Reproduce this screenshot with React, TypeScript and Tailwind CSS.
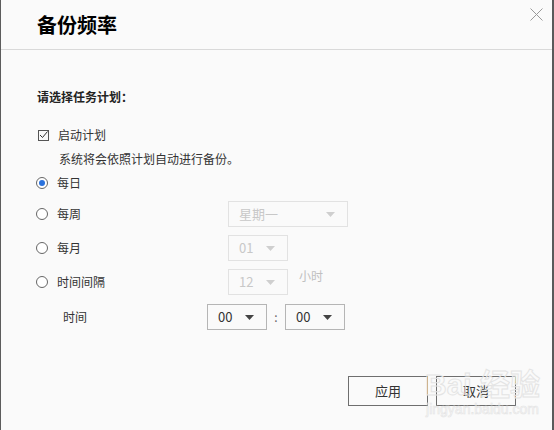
import React from "react";

const font = { fontFamily: '"Noto Sans CJK SC", "Noto Sans", sans-serif' };

function Caret({ off }: { off?: boolean }) {
  return (
    <svg width="9" height="5" viewBox="0 0 9 5">
      <path d="M0 0 L9 0 L4.5 5 Z" fill={off ? "#cfcfcf" : "#444"} />
    </svg>
  );
}

function Select({ value, w, off }: { value: string; w: string; off?: boolean }) {
  return (
    <div
      className={`${w} h-[26px] flex items-center justify-between pl-[10px] pr-[12px] border bg-[#fafafa] text-[13px] ${
        off ? "border-[#e2e2e2] text-[#c8c8c8]" : "border-[#b5b5b5] text-[#333]"
      }`}
    >
      <span>{value}</span>
      <Caret off={off} />
    </div>
  );
}

function Radio({ on }: { on?: boolean }) {
  return (
    <div className="w-[12px] h-[12px] rounded-full border border-[#666] flex items-center justify-center bg-white">
      {on && <div className="w-[6px] h-[6px] rounded-full bg-[#2a72dd]" />}
    </div>
  );
}

const options = [
  { label: "每日", on: true },
  { label: "每周", select: { value: "星期一", w: "w-[120px]" } },
  { label: "每月", select: { value: "01", w: "w-[60px]" } },
  { label: "时间间隔", select: { value: "12", w: "w-[60px]" }, unit: "小时" },
];

export default function App() {
  return (
    <div
      style={font}
      className="relative w-[554px] h-[430px] bg-[#fafafa] border-l border-l-[#5c5c5c] border-r-2 border-r-[#5a5a5a] flex flex-col text-[12px] text-[#333]"
    >
      {/* header */}
      <div className="h-[50px] border-b border-[#d9d9d9] flex items-start justify-between pl-[36px] pr-[9px] shrink-0">
        <h1 className="mt-[11px] text-[20px] font-bold text-black leading-[28px]">备份频率</h1>
        <svg width="13" height="13" viewBox="0 0 13 13" className="mt-[8px]">
          <path d="M0.5 0.5 L12.5 12.5 M12.5 0.5 L0.5 12.5" stroke="#9a9a9a" strokeWidth="1" />
        </svg>
      </div>

      {/* body */}
      <div className="pl-[35px] pt-[37px] flex flex-col">
        <div className="h-[20px] pl-[1px] flex items-center font-bold text-[#222]">请选择任务计划：</div>

        <div className="mt-[18px] h-[20px] flex items-center">
          <div className="ml-[2px] w-[11px] h-[11px] border border-[#555] flex items-center justify-center">
            <svg width="9" height="8" viewBox="0 0 9 8">
              <path d="M1 4 L3.5 6.5 L8.5 0.5" stroke="#333" strokeWidth="1" fill="none" />
            </svg>
          </div>
          <span className="ml-[9px]">启动计划</span>
        </div>
        <div className="mt-[4px] h-[20px] flex items-center pl-[23px]">系统将会依照计划自动进行备份。</div>

        {options.map((o, i) => (
          <div key={i} className={`flex items-center ${i === 0 ? "mt-[4px] h-[20px]" : "mt-[8px] h-[26px]"}`}>
            <div className="w-[192px] flex items-center">
              <Radio on={o.on} />
              <span className="ml-[9px]">{o.label}</span>
            </div>
            {o.select && <Select value={o.select.value} w={o.select.w} off={!o.on} />}
            {o.unit && <span className="ml-[11px] -mt-[12px] text-[#c0c0c0]">{o.unit}</span>}
          </div>
        ))}

        <div className="mt-[9px] h-[26px] flex items-center">
          <span className="w-[171px] pl-[27px]">时间</span>
          <Select value="00" w="w-[60px]" />
          <span className="w-[18px] text-center text-[#666]">:</span>
          <Select value="00" w="w-[60px]" />
        </div>

        <div className="mt-[46px] flex gap-[8px] pl-[312px]">
          <button className="w-[80px] h-[30px] border border-[#6e6e6e] bg-[#fafafa] text-[13px] text-[#333]">应用</button>
          <button className="w-[80px] h-[30px] border border-[#6e6e6e] bg-[#fafafa] text-[13px] text-[#333]">取消</button>
        </div>
      </div>

      {/* watermark */}
      <div className="absolute left-[424px] top-[370px] flex flex-col items-center pointer-events-none select-none">
        <span
          className="text-[30px] font-bold leading-none text-transparent"
          style={{ WebkitTextStroke: "1px #e4e4e4", fontFamily: '"Liberation Sans", "Noto Sans CJK SC", sans-serif' }}
        >
          Bai 经验
        </span>
        <span
          className="text-[14px] leading-[18px] text-transparent"
          style={{ WebkitTextStroke: "0.6px #e4e4e4", fontFamily: '"Liberation Sans", sans-serif' }}
        >
          jingyan.baidu.com
        </span>
      </div>
    </div>
  );
}
